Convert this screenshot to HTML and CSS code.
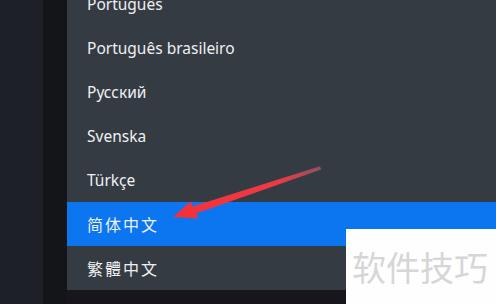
FILE: index.html
```html
<!DOCTYPE html>
<html lang="zh-CN">
  <head>
    <meta charset="UTF-8" />
    <meta name="viewport" content="width=device-width, initial-scale=1.0" />
    <title>Language menu</title>
    <link rel="stylesheet" href="styles.css">
  </head>
  <body>
    <div class="page">
      <div class="rail"></div>
      <div class="gutter"></div>
      <div class="main">
        <ul class="lang-menu">
          <li class="lang-item">Português</li>
          <li class="lang-item">Português brasileiro</li>
          <li class="lang-item">Русский</li>
          <li class="lang-item">Svenska</li>
          <li class="lang-item">Türkçe</li>
          <li class="lang-item cjk active">简体中文</li>
          <li class="lang-item cjk">繁體中文</li>
        </ul>
      </div>

      <svg class="arrow" width="496" height="304" viewBox="0 0 496 304">
        <defs>
          <linearGradient id="fade" x1="175" y1="216" x2="322" y2="167" gradientUnits="userSpaceOnUse">
            <stop offset="0" stop-color="#f5303a" />
            <stop offset="0.7" stop-color="#ee3a44" />
            <stop offset="1" stop-color="#8a5068" />
          </linearGradient>
        </defs>
        <polygon fill="url(#fade)"
          points="173,217 190.5,201.5 192.6,206.4 320,166.2 321.2,169.6 196,213.4 198,218.4" />
      </svg>

      <div class="watermark">软件技巧</div>
    </div>
  </body>
</html>
```

FILE: styles.css
```css
html,
body {
  margin: 0;
  padding: 0;
}
body {
  background-color: #16151b;
  font-family: "Noto Sans", "Liberation Sans", sans-serif;
}
.page {
  position: relative;
  width: 496px;
  height: 304px;
  display: flex;
  overflow: hidden;
}
.rail {
  width: 43px;
  background-color: #1d2026;
}
.gutter {
  width: 24px;
  background-color: #141519;
}
.main {
  flex: 1;
  background-color: #17161d;
}
.lang-menu {
  list-style: none;
  margin: -18px 0 0 0;
  padding: 0;
  background-color: #353b43;
}
.lang-item {
  height: 44px;
  display: flex;
  align-items: center;
  padding-left: 20px;
  color: #eef0f2;
  font-size: 15.5px;
}
.lang-item.cjk {
  font-family: "Noto Sans CJK SC", "Noto Sans", sans-serif;
  font-size: 16px;
  letter-spacing: 2px;
}
.lang-item.active {
  background-color: #0b76ef;
}
.arrow {
  position: absolute;
  left: 0;
  top: 0;
}
.watermark {
  position: absolute;
  left: 346px;
  top: 229px;
  width: 150px;
  height: 75px;
  background-color: #fefefe;
  color: #d6d6d6;
  font-family: "Noto Sans CJK SC", sans-serif;
  font-size: 34px;
  line-height: 75px;
  padding-left: 6px;
  box-sizing: border-box;
  white-space: nowrap;
}
```
